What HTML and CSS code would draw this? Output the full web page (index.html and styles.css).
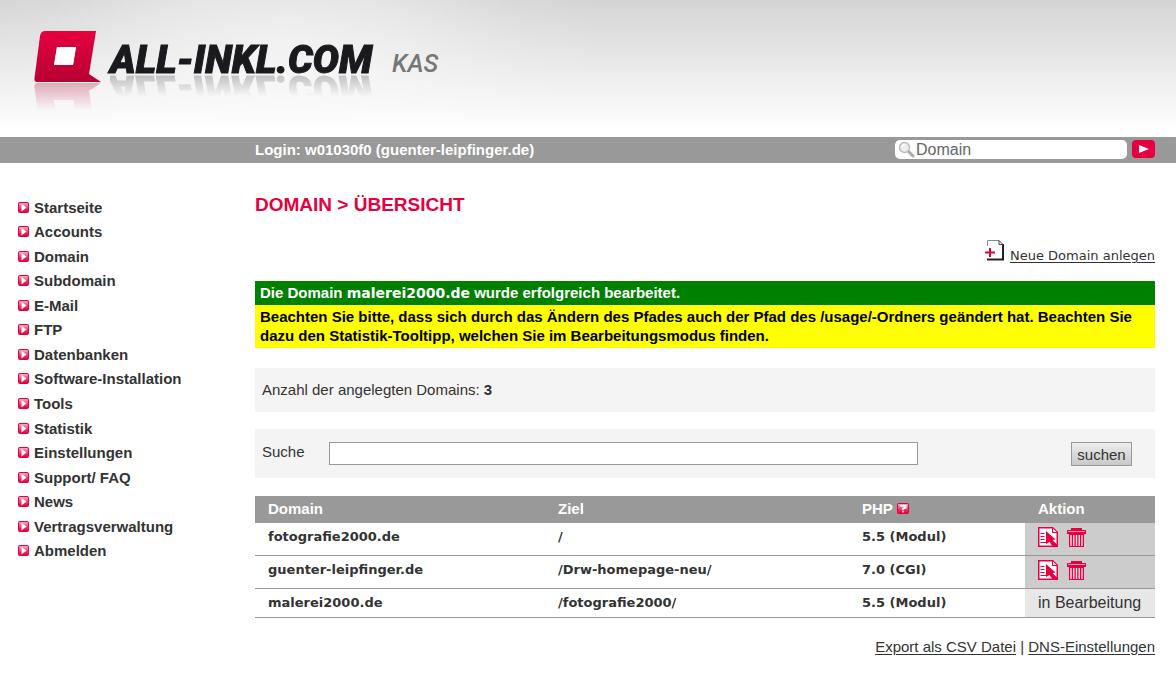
FILE: index.html
```html
<!DOCTYPE html>
<html lang="de">
<head>
<meta charset="utf-8">
<title>ALL-INKL.COM KAS – Domain Übersicht</title>
<link rel="stylesheet" href="styles.css">
</head>
<body>
<svg class="sprites" aria-hidden="true">
  <defs>
    <linearGradient id="pink" x1="0" y1="0" x2="0" y2="1">
      <stop offset="0" stop-color="#f8b0c4"/><stop offset=".5" stop-color="#ef4472"/><stop offset="1" stop-color="#e5003f"/>
    </linearGradient>
    <linearGradient id="logo-red" x1="0" y1="0" x2="0" y2="1">
      <stop offset="0" stop-color="#e6003e"/><stop offset="1" stop-color="#b80032"/>
    </linearGradient>
  </defs>
  <symbol id="bullet" viewBox="0 0 11 11">
    <rect width="11" height="11" rx="2" fill="#e5003f"/>
    <rect x="1" y="1" width="9" height="9" rx="1" fill="url(#pink)"/>
    <path d="M3.500 2l5 3.500-5 4z" fill="#fff"/>
  </symbol>
  <symbol id="help" viewBox="0 0 12 11">
    <rect width="12" height="11" rx="2" fill="#e5003f"/>
    <rect x="1" y="1" width="10" height="9" rx="1" fill="url(#pink)"/>
    <path d="M3 2.800h5.500v2L6 5.500v1.200M6 7.700v1.800" fill="none" stroke="#fff" stroke-width="1.800"/>
  </symbol>
  <symbol id="edit" viewBox="0 0 20 20">
    <path d="M0 0h15l5 5v15H0z" fill="#e5003f"/>
    <path d="M1.500 1.500h12.500v4.500h4.500v12.500h-17z" fill="#fff"/>
    <path d="M15 1.500l3.500 3.500H15z" fill="#fff"/>
    <path d="M2.500 6.500h4M2.500 9.500h4M2.500 12.500h4M2.500 15.500h7" stroke="#e5003f"/>
    <path d="M8 4l9.500 8.500-3 .500L20 18.500V20h-5l-3.500-5L8 17z" fill="#e5003f"/>
  </symbol>
  <symbol id="trash" viewBox="0 0 19 20">
    <path d="M4 1h11v3H4zM0 3h19v4H0zM2 7h15v13H2z" fill="#e5003f"/>
    <path d="M1 4.500h17" stroke="#f3a0b6"/>
    <path d="M4 8v11M6.750 8v11M9.500 8v11M12.250 8v11M15 8v11" stroke="#fbe6ec" stroke-width="1.400"/>
  </symbol>
</svg>

<header class="header">
  <a class="brand" href="#" aria-label="ALL-INKL.COM KAS">
    <svg class="brand-mark" viewBox="0 0 67 52" aria-hidden="true">
      <path fill="url(#logo-red)" fill-rule="evenodd" d="M11 0H62L55 43 67 51H3Q0 51 .500 47L6 5Q7 0 11 0zM23 16L20 34H39L42 16z"/>
      <path fill="#fff" d="M23 16L20 34H39L42 16z"/>
    </svg>
    <span class="brand-name">ALL-INKL.COM</span>
    <span class="brand-product">KAS</span>
  </a>
</header>

<div class="login-bar">
  <p class="login">Login: w01030f0 (guenter-leipfinger.de)</p>
  <form class="quick-search">
    <label class="quick-field">
      <svg class="lens" viewBox="0 0 17 17" aria-hidden="true">
        <path d="M10 10l5 5" stroke="#aaa" stroke-width="3" stroke-linecap="round"/>
        <circle cx="6.500" cy="6.500" r="5" fill="#eee" stroke="#bbb" stroke-width="1.500"/>
        <path d="M4 6q.500-2 2.500-2.500" fill="none" stroke="#fff" stroke-width="1.500"/>
      </svg>
      <input type="text" value="Domain" aria-label="Schnellsuche">
    </label>
    <button type="button" class="quick-go" aria-label="Los">
      <svg viewBox="0 0 10 8" aria-hidden="true"><path d="M0 0l10 4-10 4z" fill="#fff"/></svg>
    </button>
  </form>
</div>

<div class="layout">
  <nav class="menu" aria-label="Hauptmenü">
    <a href="#"><svg><use href="#bullet"/></svg>Startseite</a>
    <a href="#"><svg><use href="#bullet"/></svg>Accounts</a>
    <a href="#"><svg><use href="#bullet"/></svg>Domain</a>
    <a href="#"><svg><use href="#bullet"/></svg>Subdomain</a>
    <a href="#"><svg><use href="#bullet"/></svg>E-Mail</a>
    <a href="#"><svg><use href="#bullet"/></svg>FTP</a>
    <a href="#"><svg><use href="#bullet"/></svg>Datenbanken</a>
    <a href="#"><svg><use href="#bullet"/></svg>Software-Installation</a>
    <a href="#"><svg><use href="#bullet"/></svg>Tools</a>
    <a href="#"><svg><use href="#bullet"/></svg>Statistik</a>
    <a href="#"><svg><use href="#bullet"/></svg>Einstellungen</a>
    <a href="#"><svg><use href="#bullet"/></svg>Support/ FAQ</a>
    <a href="#"><svg><use href="#bullet"/></svg>News</a>
    <a href="#"><svg><use href="#bullet"/></svg>Vertragsverwaltung</a>
    <a href="#"><svg><use href="#bullet"/></svg>Abmelden</a>
  </nav>

  <main class="content">
    <h1>DOMAIN &gt; ÜBERSICHT</h1>

    <div class="new-domain">
      <svg viewBox="0 0 19 21" aria-hidden="true">
        <path d="M2.500 6V.500H14" fill="none" stroke="#888"/>
        <path d="M18 4v15.500H2" fill="none" stroke="#222" stroke-width="2"/>
        <path d="M14 .500v4h4L14 .500" fill="none" stroke="#444"/>
        <path d="M0 12.500h10M5 8v9" stroke="#e5003f" stroke-width="2"/>
      </svg>
      <a href="#">Neue Domain anlegen</a>
    </div>

    <p class="notice success">Die Domain <strong>malerei2000.de</strong> wurde erfolgreich bearbeitet.</p>
    <p class="notice warning">Beachten Sie bitte, dass sich durch das Ändern des Pfades auch der Pfad des /usage/-Ordners geändert hat. Beachten Sie dazu den Statistik-Tooltipp, welchen Sie im Bearbeitungsmodus finden.</p>

    <p class="panel count">Anzahl der angelegten Domains: <b>3</b></p>

    <form class="panel search">
      <label for="suche">Suche</label>
      <input id="suche" type="text">
      <button type="button">suchen</button>
    </form>

    <table class="domains">
      <colgroup><col><col class="c-target"><col class="c-php"><col class="c-action"></colgroup>
      <thead>
        <tr><th>Domain</th><th>Ziel</th><th>PHP <svg class="help" aria-hidden="true"><use href="#help"/></svg></th><th>Aktion</th></tr>
      </thead>
      <tbody>
        <tr><td>fotografie2000.de</td><td>/</td><td>5.5 (Modul)</td>
          <td class="action"><div class="tools"><button type="button" aria-label="Bearbeiten"><svg class="edit"><use href="#edit"/></svg></button><button type="button" aria-label="Löschen"><svg class="trash"><use href="#trash"/></svg></button></div></td></tr>
        <tr><td>guenter-leipfinger.de</td><td>/Drw-homepage-neu/</td><td>7.0 (CGI)</td>
          <td class="action"><div class="tools"><button type="button" aria-label="Bearbeiten"><svg class="edit"><use href="#edit"/></svg></button><button type="button" aria-label="Löschen"><svg class="trash"><use href="#trash"/></svg></button></div></td></tr>
        <tr class="busy"><td>malerei2000.de</td><td>/fotografie2000/</td><td>5.5 (Modul)</td><td class="state">in Bearbeitung</td></tr>
      </tbody>
    </table>

    <p class="links"><a href="#">Export als CSV Datei</a> | <a href="#">DNS-Einstellungen</a></p>
  </main>
</div>
</body>
</html>
```
FILE: styles.css
```css
* { box-sizing: border-box; }
body {
  margin: 0;
  background: #fff;
  color: #333;
  font: 15px/19px "Liberation Sans", Arial, sans-serif;
}
p, h1 { margin: 0; }
a { color: inherit; }
button, input { font: inherit; color: inherit; margin: 0; }
.sprites { position: absolute; width: 0; height: 0; }

.header {
  height: 137px;
  padding: 31px 34px 0;
  background:
    radial-gradient(ellipse 320px 170px at 285px 40px, rgba(255,255,255,.55), rgba(255,255,255,.4) 35%, rgba(255,255,255,.1) 75%, rgba(255,255,255,0)),
    linear-gradient(#d4d4d4, #fff 96%);
}
.brand { display: inline-flex; align-items: flex-start; text-decoration: none; }
.brand-mark {
  width: 67px;
  height: 52px;
  -webkit-box-reflect: below -1px linear-gradient(transparent 45%, rgba(0,0,0,.3));
}
.brand-name {
  margin: 14px 0 0 9px;
  height: 30px;
  font: italic 900 39px/30px Roboto, sans-serif;
  color: #1a1a1e;
  -webkit-text-stroke: 1px #1a1a1e;
  -webkit-box-reflect: below -1px linear-gradient(transparent 25%, rgba(0,0,0,.25));
}
.brand-product {
  margin: 21px 0 0 20px;
  font: italic 500 25px/24px Roboto, sans-serif;
  color: #777;
}

.login-bar {
  display: flex;
  justify-content: space-between;
  align-items: flex-start;
  height: 26px;
  padding: 3px 21px 0 255px;
  background: #999;
}
.login { color: #fff; font-weight: bold; }
.quick-search { display: flex; gap: 5px; }
.quick-field {
  display: flex;
  align-items: center;
  width: 232px;
  height: 19px;
  padding-left: 3px;
  background: #fff;
  border-radius: 5px;
}
.lens { width: 17px; height: 17px; flex: none; }
.quick-field input {
  flex: 1;
  min-width: 0;
  height: 19px;
  padding: 0 1px;
  border: 0;
  background: none;
  font-size: 16px;
  color: #666;
}
.quick-go {
  display: flex;
  align-items: center;
  justify-content: center;
  width: 23px;
  height: 18px;
  padding: 0;
  border: 0;
  border-radius: 4px;
  background: #e5003f;
}
.quick-go svg { width: 10px; height: 8px; }

.layout { display: flex; padding: 0 21px 20px 18px; }
.menu {
  display: grid;
  flex: none;
  align-self: flex-start;
  width: 237px;
  height: 368px;
  margin-top: 32px;
  grid-auto-rows: 1fr;
}
.menu a {
  display: flex;
  align-items: center;
  gap: 5px;
  font-weight: bold;
  text-decoration: none;
}
.menu svg { width: 11px; height: 11px; }

.content { flex: 1; min-width: 0; padding-top: 32px; }
h1 { font-size: 19px; line-height: 20px; color: #e5003f; }
.new-domain {
  display: flex;
  justify-content: flex-end;
  gap: 6px;
  margin: 25px 0 15px;
  font: 13px/20px "DejaVu Sans", Verdana, sans-serif;
}
.new-domain svg { width: 19px; height: 21px; }
.new-domain a { padding-top: 6px; text-underline-offset: 2px; }

.notice { padding: 3px 5px; font-weight: bold; }
.success { background: #008000; color: #fff; line-height: 18px; }
.success strong { font-family: "DejaVu Sans", Verdana, sans-serif; font-size: 14px; }
.warning { padding-top: 2px; background: #ff0; color: #000; }

.panel { background: #f4f4f4; }
.count { margin-top: 20px; padding: 12px 7px 13px; }
.search {
  display: flex;
  align-items: flex-start;
  margin: 17px 0 18px;
  padding: 13px 23px 12px 7px;
}
.search label { width: 67px; flex: none; }
.search input {
  flex: 1;
  min-width: 0;
  height: 23px;
  margin-right: 153px;
  border: 1px solid #999;
  background: #fff;
}
.search button {
  width: 61px;
  height: 24px;
  padding: 0;
  border: 1px solid #999;
  background: linear-gradient(#ededed, #c8c8c8);
}

.domains { width: 100%; table-layout: fixed; border-collapse: separate; border-spacing: 0; }
.c-target { width: 304px; }
.c-php { width: 176px; }
.c-action { width: 130px; }
.domains th {
  height: 27px;
  padding: 0 13px 2px;
  background: #999;
  color: #fff;
  text-align: left;
}
.help { width: 12px; height: 11px; }
.domains td {
  height: 33px;
  padding: 4px 13px 0;
  border-bottom: 1px solid #999;
  font: bold 13px/20px "DejaVu Sans", Verdana, sans-serif;
  vertical-align: top;
}
.domains .busy td { height: 29px; }
.domains .action { background: #ccc; }
.domains .state { background: #e7e7e7; font: 16px/20px "Liberation Sans", Arial, sans-serif; white-space: nowrap; }
.tools { display: flex; gap: 9px; }
.tools button { display: flex; padding: 0; border: 0; background: none; }
.edit { width: 20px; height: 20px; }
.trash { width: 19px; height: 20px; }

.links { margin-top: 19px; text-align: right; }
.links a { text-underline-offset: 2px; }
```
